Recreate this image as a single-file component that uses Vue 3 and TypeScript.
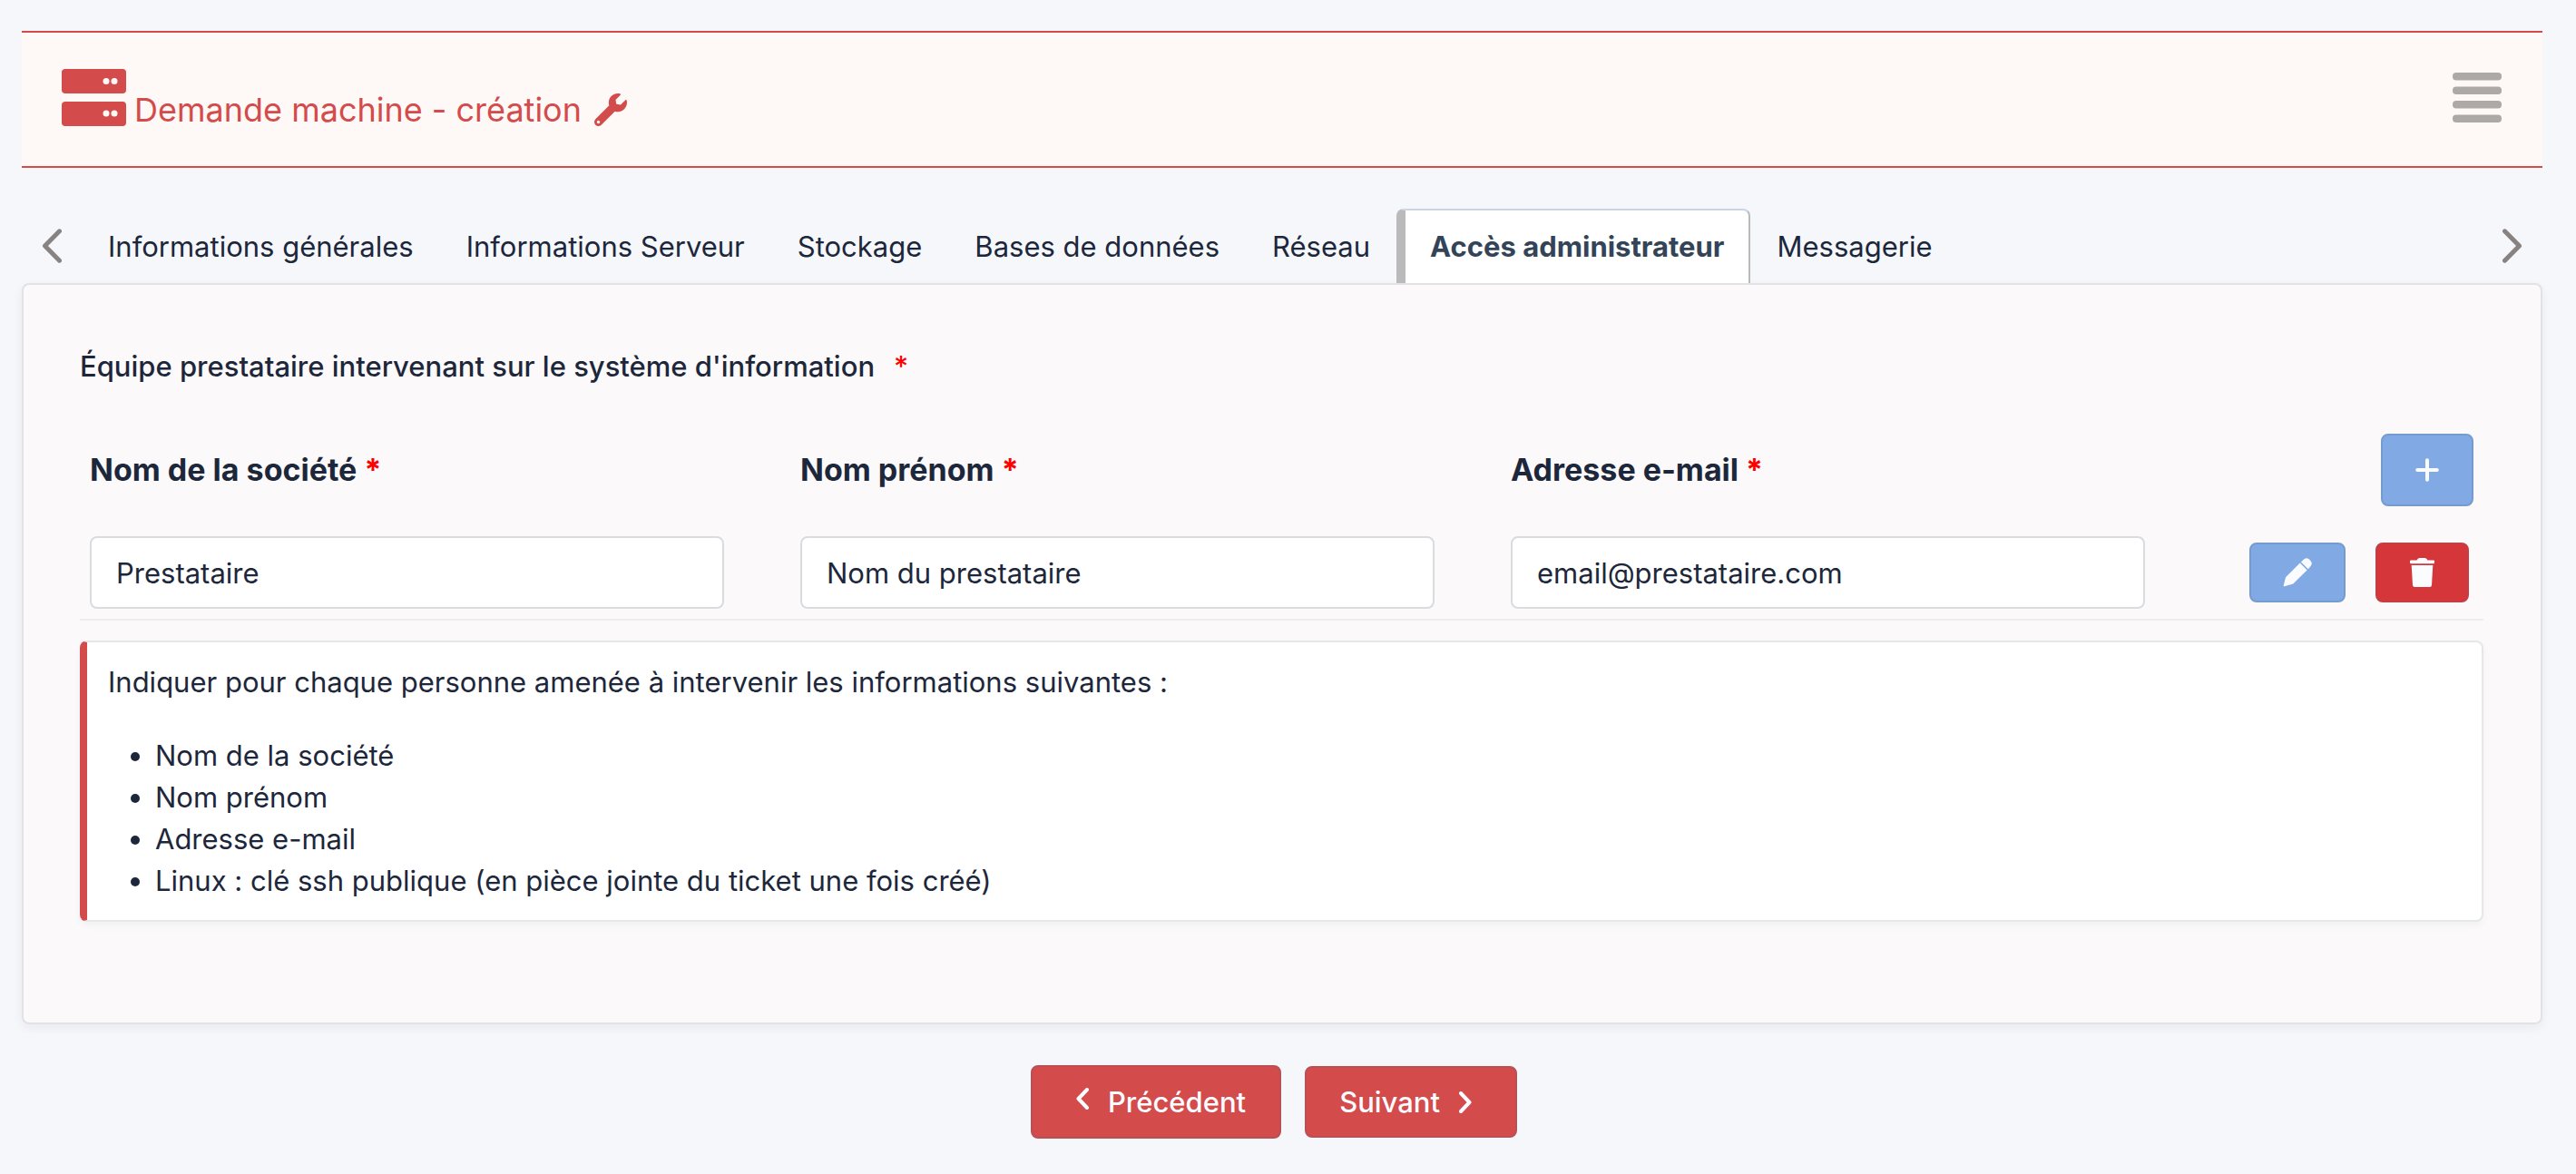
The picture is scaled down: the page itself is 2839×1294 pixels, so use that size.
<script setup lang="ts">
import { reactive, ref } from 'vue'

interface Field {
  id: string
  label: string
  type: string
  value: string
}

const tabs: string[] = [
  'Informations générales',
  'Informations Serveur',
  'Stockage',
  'Bases de données',
  'Réseau',
  'Accès administrateur',
  'Messagerie',
]
const activeTab = ref<number>(5)

const fields = reactive<Field[]>([
  { id: 'societe', label: 'Nom de la société', type: 'text', value: 'Prestataire' },
  { id: 'nom', label: 'Nom prénom', type: 'text', value: 'Nom du prestataire' },
  { id: 'email', label: 'Adresse e-mail', type: 'email', value: 'email@prestataire.com' },
])

const hints: string[] = [
  'Nom de la société',
  'Nom prénom',
  'Adresse e-mail',
  'Linux : clé ssh publique (en pièce jointe du ticket une fois créé)',
]

function move(step: number): void {
  activeTab.value = Math.min(tabs.length - 1, Math.max(0, activeTab.value + step))
}
</script>

<template>
  <div class="page">
    <header class="banner">
      <div class="brand">
        <svg class="server" viewBox="0 0 71 63" aria-hidden="true">
          <rect width="71" height="27" rx="4" />
          <rect y="36" width="71" height="27" rx="4" />
          <g class="led">
            <circle cx="49" cy="13.5" r="3.5" />
            <circle cx="58" cy="13.5" r="3.5" />
            <circle cx="49" cy="49" r="3.5" />
            <circle cx="58" cy="49" r="3.5" />
          </g>
        </svg>
        <h1>Demande machine - création</h1>
        <svg class="wrench" viewBox="0 0 512 512" aria-hidden="true">
          <path
            d="M507.73 109.1c-2.24-9.03-13.54-12.09-20.12-5.51l-74.36 74.36-67.88-11.31-11.31-67.88 74.36-74.36c6.62-6.62 3.43-17.9-5.66-20.16-47.38-11.74-99.55.91-136.58 37.93-39.64 39.64-50.55 97.1-34.05 147.2L18.74 402.76c-24.99 24.99-24.99 65.51 0 90.5 24.99 24.99 65.51 24.99 90.5 0l213.21-213.21c50.12 16.71 107.47 5.68 147.37-34.22 37.07-37.07 49.7-89.32 37.91-136.73zM64 472c-13.25 0-24-10.75-24-24 0-13.26 10.75-24 24-24s24 10.74 24 24c0 13.25-10.75 24-24 24z"
          />
        </svg>
      </div>
      <button class="menu" type="button" aria-label="Menu">
        <svg viewBox="0 0 54 55" aria-hidden="true">
          <rect width="54" height="8.5" rx="4" />
          <rect y="15.5" width="54" height="8.5" rx="4" />
          <rect y="31" width="54" height="8.5" rx="4" />
          <rect y="46.5" width="54" height="8.5" rx="4" />
        </svg>
      </button>
    </header>

    <nav class="strip">
      <button class="arrow" type="button" aria-label="Onglet précédent" @click="move(-1)">
        <svg viewBox="0 0 22 38" aria-hidden="true"><path d="M19.5 2.8 3.5 19l16 16.2" /></svg>
      </button>
      <div class="tabs" role="tablist">
        <button
          v-for="(tab, i) in tabs"
          :key="tab"
          class="tab"
          :class="{ active: i === activeTab }"
          type="button"
          role="tab"
          :aria-selected="i === activeTab"
          @click="activeTab = i"
        >
          {{ tab }}
        </button>
      </div>
      <button class="arrow" type="button" aria-label="Onglet suivant" @click="move(1)">
        <svg viewBox="0 0 22 38" aria-hidden="true"><path d="M2.5 2.8 18.5 19l-16 16.2" /></svg>
      </button>
    </nav>

    <main class="card">
      <h2>Équipe prestataire intervenant sur le système d'information<span class="star">*</span></h2>

      <form class="team" @submit.prevent>
        <label v-for="f in fields" :key="f.id" :for="f.id">{{ f.label }} <span class="req">*</span></label>
        <div class="tools">
          <button class="btn blue add" type="button" aria-label="Ajouter">
            <svg viewBox="0 0 26 26" aria-hidden="true"><path d="M13 2.2v21.6M2.2 13h21.6" /></svg>
          </button>
        </div>
        <input v-for="f in fields" :id="f.id" :key="f.id" v-model="f.value" :type="f.type" />
        <div class="tools row">
          <button class="btn blue edit" type="button" aria-label="Modifier">
            <svg viewBox="0 0 32 32" aria-hidden="true">
              <path d="M18.8 5.6 26.6 13.4 11.8 28.1Q11.3 28.6 10.5 28.8L1.6 31.3Q.5 31.5.7 30.4L2.8 21.9Q3 21.2 3.5 20.7Z" />
              <path d="M20 4.4 22.4 2Q26-1.6 29.8 2.2T30 9.8L27.8 12.2Z" />
            </svg>
          </button>
          <button class="btn red trash" type="button" aria-label="Supprimer">
            <svg viewBox="0 0 27 32" aria-hidden="true">
              <path d="M1 2.6H7.5Q8.5 0 10.5 0h6Q18.5 0 19.5 2.6H26a1 1 0 0 1 1 1V5a1.2 1.2 0 0 1-1.2 1.2H1.2A1.2 1.2 0 0 1 0 5V3.6a1 1 0 0 1 1-1z" />
              <path d="M1.7 8H25.3L24 29.8Q23.8 32 21.8 32H5.2Q3.2 32 3 29.8z" />
            </svg>
          </button>
        </div>
      </form>

      <section class="note">
        <p>Indiquer pour chaque personne amenée à intervenir les informations suivantes :</p>
        <ul>
          <li v-for="hint in hints" :key="hint">{{ hint }}</li>
        </ul>
      </section>
    </main>

    <footer class="actions">
      <button class="btn nav prev" type="button" @click="move(-1)">
        <svg viewBox="0 0 14 24" aria-hidden="true"><path d="M12 2 2.5 12 12 22" /></svg>
        Précédent
      </button>
      <button class="btn nav next" type="button" @click="move(1)">
        Suivant
        <svg viewBox="0 0 14 24" aria-hidden="true"><path d="M2 2 11.5 12 2 22" /></svg>
      </button>
    </footer>
  </div>
</template>

<style>
body {
  margin: 0;
  background: #f5f7fb;
}
</style>

<style scoped>
.page {
  padding: 34px 37px 38px 24px;
  font-family: Inter, 'Liberation Sans', sans-serif;
  font-size: 31px;
  line-height: 46px;
  color: #1d273b;
}

.page * {
  box-sizing: border-box;
}

svg {
  display: block;
  flex: none;
  fill: currentColor;
}

button {
  margin: 0;
  padding: 0;
  border: 0;
  background: none;
  font: inherit;
  color: inherit;
  cursor: pointer;
}

.banner {
  display: flex;
  align-items: center;
  justify-content: space-between;
  padding: 40px 45px 44px 44px;
  border: solid #d34b4b;
  border-width: 2px 0;
  background: #fef9f7;
}

.brand {
  display: flex;
  align-items: flex-end;
  color: #d34b4b;
}

.server {
  width: 71px;
  height: 63px;
}

.led {
  fill: #fef9f7;
}

h1 {
  margin: 0 14px 0 9px;
  font-size: 36px;
  line-height: 36px;
  font-weight: 400;
}

.wrench {
  width: 36px;
  height: 36px;
}

.menu {
  color: #ada9a7;
}

.menu svg {
  width: 54px;
  height: 55px;
}

.strip {
  display: flex;
  margin-top: 45px;
}

.arrow {
  padding: 0 22px;
  color: #888281;
}

.arrow svg {
  width: 22px;
  height: 38px;
  fill: none;
  stroke: currentColor;
  stroke-width: 5;
  stroke-linecap: round;
  stroke-linejoin: round;
}

.tabs {
  display: flex;
  flex: 1;
}

.tab {
  padding: 17px 27px;
  border: 2px solid transparent;
  border-bottom: 0;
  border-radius: 8px 8px 0 0;
  white-space: nowrap;
}

.tab.active {
  border-color: #c8d5e4 #bababa;
  border-left-width: 10px;
  background: #fff;
  color: #334459;
  font-weight: 700;
}

.card {
  padding: 67px 63px 111px 62px;
  border: 2px solid #e2e2e4;
  border-radius: 8px;
  background: #fbf9fa;
  box-shadow: 0 4px 12px rgba(29, 39, 59, 0.06);
}

h2 {
  margin: 0;
  font-size: 31px;
  line-height: 46px;
  font-weight: 500;
}

.star {
  margin-left: 21px;
  color: #f00;
}

.req {
  color: #f00;
}

.team {
  display: grid;
  grid-template-columns: repeat(3, 1fr) 278px;
  gap: 33px 84px;
  align-items: center;
  margin: 51px 0 22px;
  padding: 0 11px 11px;
  border-bottom: 2px solid #eeecee;
}

label {
  font-size: 34px;
  font-weight: 700;
}

input {
  width: 100%;
  height: 80px;
  padding: 0 27px;
  border: 2px solid #d9dbde;
  border-radius: 8px;
  background: #fff;
  font: inherit;
  color: inherit;
}

.tools {
  display: flex;
  justify-content: flex-end;
  gap: 33px;
}

.row {
  padding-right: 5px;
}

.btn {
  display: flex;
  align-items: center;
  justify-content: center;
  border: 2px solid;
  border-radius: 8px;
}

.btn svg {
  color: #fafcff;
}

.blue {
  border-color: #769bcf;
  background: #81a9e3;
}

.red {
  border-color: #c13f45;
  background: #d53639;
}

.add {
  width: 102px;
  height: 80px;
}

.add svg {
  width: 26px;
  height: 26px;
}

.add svg,
.nav svg {
  fill: none;
  stroke: currentColor;
  stroke-width: 4;
  stroke-linecap: round;
  stroke-linejoin: round;
}

.edit {
  width: 106px;
  height: 66px;
}

.edit svg {
  width: 32px;
  height: 32px;
}

.trash {
  width: 103px;
  height: 66px;
}

.trash svg {
  width: 27px;
  height: 32px;
}

.note {
  padding: 21px 23px 20px;
  border: 2px solid #e6e7e9;
  border-left: 8px solid #d34b4b;
  border-radius: 8px;
  background: #fff;
  box-shadow: 0 4px 8px rgba(29, 39, 59, 0.04);
}

p {
  margin: 0 0 35px;
}

ul {
  margin: 0;
  padding-left: 52px;
}

.actions {
  display: flex;
  align-items: center;
  justify-content: center;
  gap: 26px;
  margin-top: 45px;
  padding-right: 18px;
}

.nav {
  gap: 21px;
  border-color: #b85057;
  background: #d34b4b;
  color: #fafcff;
  font-weight: 500;
}

.nav svg {
  width: 14px;
  height: 24px;
}

.prev {
  height: 81px;
  padding: 0 37px 0 48px;
}

.prev svg {
  margin-bottom: 8px;
}

.next {
  height: 79px;
  padding: 0 48px 0 36px;
}
</style>
